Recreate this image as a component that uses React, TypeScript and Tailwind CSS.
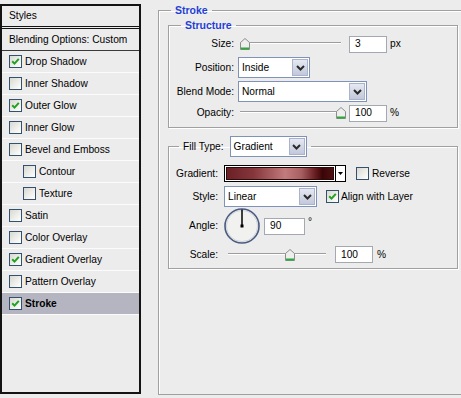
import clsx from "clsx";

const styleItems = [
  { label: "Drop Shadow", checked: true },
  { label: "Inner Shadow" },
  { label: "Outer Glow", checked: true },
  { label: "Inner Glow" },
  { label: "Bevel and Emboss" },
  { label: "Contour", indent: true },
  { label: "Texture", indent: true },
  { label: "Satin" },
  { label: "Color Overlay" },
  { label: "Gradient Overlay", checked: true },
  { label: "Pattern Overlay" },
  { label: "Stroke", checked: true, active: true },
];

function Check({ checked }: { checked?: boolean }) {
  return (
    <span className="flex h-[13px] w-[13px] shrink-0 items-center justify-center border border-[#33506f] bg-linear-to-br from-[#d9d9d2] to-white">
      {checked && (
        <svg width="9" height="9" viewBox="0 0 9 9">
          <path d="M1.2 4.3 L3.5 6.6 L7.8 1.8" fill="none" stroke="#21a121" strokeWidth="2" />
        </svg>
      )}
    </span>
  );
}

function Chevron() {
  return (
    <svg width="9" height="6" viewBox="0 0 9 6">
      <path d="M1 1 L4.5 4.5 L8 1" fill="none" stroke="#2a2a2a" strokeWidth="2" />
    </svg>
  );
}

function Select({ value, className }: { value: string; className: string }) {
  return (
    <div className={clsx("flex h-[21px] shrink-0 border border-[#7f93b8] bg-white", className)}>
      <span className="flex flex-1 items-center pl-[3px]">{value}</span>
      <span className="m-px flex w-[16px] items-center justify-center border border-[#aab3cc] bg-linear-to-b from-[#e6e9f2] to-[#c2c8db]">
        <Chevron />
      </span>
    </div>
  );
}

function Field({ value, className }: { value: string; className: string }) {
  return (
    <div className={clsx("flex h-[17px] shrink-0 items-center border border-[#a3a9b0] bg-white pl-[5px]", className)}>
      {value}
    </div>
  );
}

/** ползунок: тонкая вдавленная линия и «домик» */
function Slider({ pos, className }: { pos: number; className: string }) {
  return (
    <div className={clsx("relative h-[12px] shrink-0", className)}>
      <div className="absolute left-0 right-0 top-[4px] h-[2px] border-t border-[#9d9d9d] bg-white" />
      <svg className="absolute top-0" style={{ left: pos }} width="10" height="12" viewBox="0 0 10 12">
        <path d="M0.5 4.5 L5 0.5 L9.5 4.5 V11.5 H0.5 Z" fill="#eeeeee" stroke="#8d8d8d" />
        <path d="M1 10.5 H9" stroke="#2fa83a" strokeWidth="2" />
      </svg>
    </div>
  );
}

function Dial() {
  return (
    <svg width="36" height="36" viewBox="0 0 36 36" className="shrink-0">
      <circle cx="18" cy="18" r="17" fill="#f1f1ef" stroke="#4a5b82" strokeWidth="1.6" />
      <circle cx="18" cy="18" r="15.6" fill="none" stroke="#c9ccd3" strokeWidth="0.8" />
      <path d="M18 18 V1.5" stroke="#000" strokeWidth="1.5" />
      <rect x="16.5" y="16.5" width="3" height="3" fill="#000" />
    </svg>
  );
}

function Label({ children, className }: { children: string; className: string }) {
  return <span className={clsx("shrink-0 text-right", className)}>{children}</span>;
}

export default function App() {
  return (
    <div className="flex h-[398px] w-[461px] items-start overflow-hidden bg-[#ececec] font-['Liberation_Sans',Arial,sans-serif] text-[10.2px] text-black">
      {/* список стилей */}
      <div className="mt-[4px] flex h-[390px] w-[141px] shrink-0 flex-col border-2 border-[#141414]">
        <div className="flex h-[20px] items-center border-b-[3px] border-double border-[#141414] pl-[7px] box-content">
          Styles
        </div>
        <div className="flex h-[22px] items-center border-b border-[#3a3a3a] pl-[7px]">
          Blending Options: Custom
        </div>
        {styleItems.map((s) => (
          <div
            key={s.label}
            className={clsx(
              "flex h-[22px] items-center gap-[3px] border-b border-[#fbfbfb]",
              s.indent ? "pl-[21px]" : "pl-[7px]",
              s.active && "bg-[#b5b5c1] font-bold"
            )}
          >
            <Check checked={s.checked} />
            {s.label}
          </div>
        ))}
      </div>

      {/* панель Stroke */}
      <fieldset className="ml-[17px] mt-[4px] h-[391px] flex-1 border border-r-0 border-[#a0a0a0] pl-[9px] shadow-[inset_1px_1px_0_#fff]">
        <legend className="ml-[3px] px-[4px] text-[10.5px] font-bold leading-[12px] text-[#1f3fd6]">Stroke</legend>

        <fieldset className="mt-[3px] w-[290px] border border-[#a0a0a0] pb-[5px] shadow-[inset_1px_1px_0_#fff,1px_1px_0_#fff]">
          <legend className="ml-[12px] px-[4px] text-[10.5px] font-bold leading-[12px] text-[#1f3fd6]">Structure</legend>

          <div className="mt-[4px] flex h-[18px] items-center">
            <Label className="w-[65px]">Size:</Label>
            <Slider pos={0} className="ml-[6px] w-[101px]" />
            <Field value="3" className="ml-[8px] w-[38px]" />
            <span className="ml-[3px]">px</span>
          </div>
          <div className="mt-[4px] flex h-[21px] items-center">
            <Label className="w-[65px]">Position:</Label>
            <Select value="Inside" className="ml-[4px] w-[72px]" />
          </div>
          <div className="mt-[3px] flex h-[21px] items-center">
            <Label className="w-[65px]">Blend Mode:</Label>
            <Select value="Normal" className="ml-[4px] w-[129px]" />
          </div>
          <div className="mt-[2px] flex h-[18px] items-center">
            <Label className="w-[65px]">Opacity:</Label>
            <Slider pos={96} className="ml-[6px] w-[101px]" />
            <Field value="100" className="ml-[8px] w-[38px]" />
            <span className="ml-[3px]">%</span>
          </div>
        </fieldset>

        <fieldset className="mt-[8px] w-[290px] border border-[#a0a0a0] pb-[5px] shadow-[inset_1px_1px_0_#fff,1px_1px_0_#fff]">
          <legend className="ml-[10px] flex items-center gap-[6px] px-[4px]">
            <span>Fill Type:</span>
            <Select value="Gradient" className="w-[77px]" />
          </legend>

          <div className="mt-[8px] flex h-[17px] items-center">
            <Label className="w-[49px]">Gradient:</Label>
            <div className="ml-[6px] flex h-[17px] w-[122px] shrink-0 border border-black bg-white">
              <div className="m-px flex-1 border border-[#2a0a0a] bg-[linear-gradient(90deg,#6a2026_0%,#85363b_25%,#c27b7c_55%,#a85f62_70%,#641a1d_84%,#3a0507_90%,#4e0f12_100%)]" />
              <div className="flex w-[10px] items-center justify-center border-l border-black">
                <svg width="5" height="3" viewBox="0 0 5 3">
                  <path d="M0 0 H5 L2.5 3 Z" fill="#000" />
                </svg>
              </div>
            </div>
            <span className="ml-[10px]">
              <Check />
            </span>
            <span className="ml-[3px]">Reverse</span>
          </div>
          <div className="mt-[4px] flex h-[21px] items-center">
            <Label className="w-[49px]">Style:</Label>
            <Select value="Linear" className="ml-[6px] w-[93px]" />
            <span className="ml-[9px]">
              <Check checked />
            </span>
            <span className="ml-[2px]">Align with Layer</span>
          </div>
          <div className="mt-[1px] flex h-[36px] items-center">
            <Label className="w-[49px]">Angle:</Label>
            <span className="ml-[6px]">
              <Dial />
            </span>
            <Field value="90" className="ml-[4px] w-[41px]" />
            <span className="-mt-[8px] ml-[3px]">°</span>
          </div>
          <div className="mt-[2px] flex h-[17px] items-center">
            <Label className="w-[49px]">Scale:</Label>
            <Slider pos={57} className="ml-[10px] w-[98px]" />
            <Field value="100" className="ml-[9px] w-[38px]" />
            <span className="ml-[4px]">%</span>
          </div>
        </fieldset>
      </fieldset>
    </div>
  );
}
